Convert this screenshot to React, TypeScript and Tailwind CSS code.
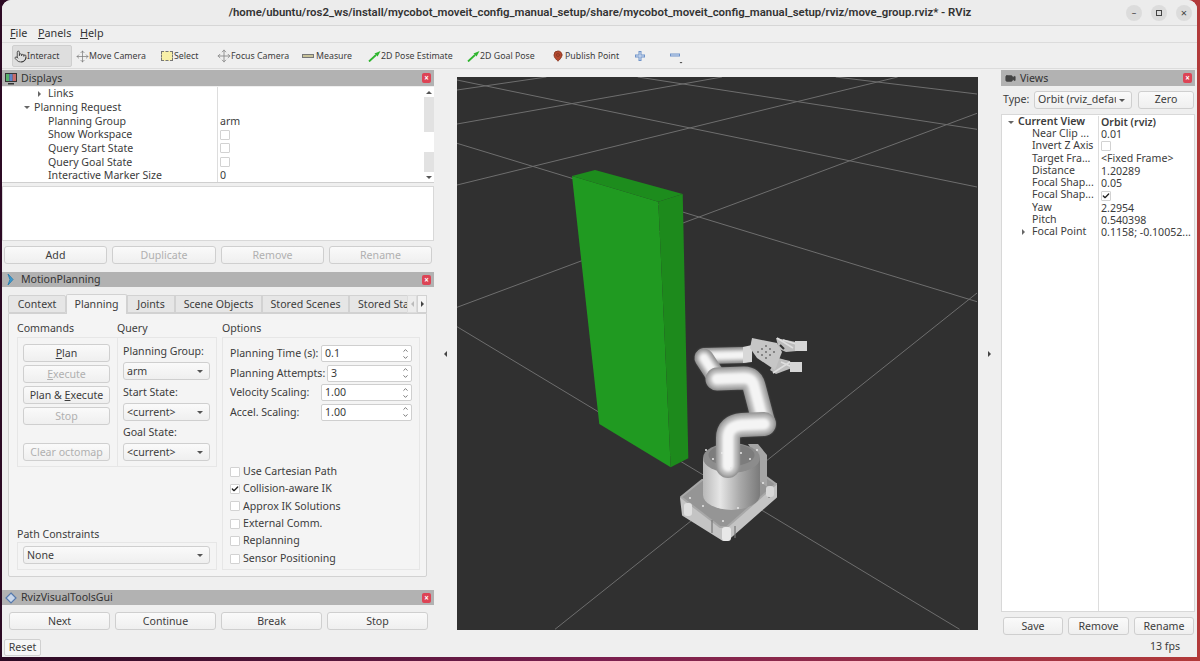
import { ChevronDown, ChevronUp, Check as CheckIcon, MapPin, Move, Pointer, Video } from "lucide-react";
import type { ReactNode } from "react";

const FONT = "font-['Noto_Sans',sans-serif]";

function Btn({ label, disabled, className = "" }: { label: ReactNode; disabled?: boolean; className?: string }) {
  return (
    <div
      className={`h-[18px] pt-[1px] flex items-center justify-center rounded-[3px] border border-[#cfcfcf] bg-gradient-to-b from-[#fafafa] to-[#efefef] text-[10.6px] ${
        disabled ? "text-[#b0b0b0]" : "text-[#3c3c3c]"
      } ${className}`}
    >
      {label}
    </div>
  );
}

function Combo({ label, className = "" }: { label: string; className?: string }) {
  return (
    <div className={`h-[18px] pt-[1px] flex items-center justify-between pl-[3px] pr-[6px] rounded-[3px] border border-[#cfcfcf] bg-gradient-to-b from-[#fafafa] to-[#efefef] text-[10.6px] text-[#3c3c3c] overflow-hidden ${className}`}>
      <span className="whitespace-nowrap overflow-hidden">{label}</span>
      <span className="ml-[3px] shrink-0 w-0 h-0 border-x-[3px] border-x-transparent border-t-[3px] border-t-[#555]" />
    </div>
  );
}

function Spin({ value, className = "" }: { value: string; className?: string }) {
  return (
    <div className={`h-[17px] shrink-0 flex items-center justify-between pl-[3px] rounded-[2px] border border-[#cfcfcf] bg-white text-[10.6px] text-[#3c3c3c] ${className}`}>
      <span className="pt-[1px]">{value}</span>
      <span className="w-[9px] mr-[1px] flex flex-col items-center text-[#666]">
        <ChevronUp size={7} strokeWidth={3} />
        <ChevronDown size={7} strokeWidth={3} />
      </span>
    </div>
  );
}

function Box({ checked }: { checked?: boolean }) {
  return (
    <span className="w-[10px] h-[10px] shrink-0 flex items-center justify-center rounded-[1px] border border-[#d2d2d2] bg-white text-[#222]">
      {checked && <CheckIcon size={8} strokeWidth={4} />}
    </span>
  );
}

function CloseDot() {
  return (
    <span className="w-[9px] h-[10px] flex items-center justify-center rounded-[2px] bg-[#dd4455] text-white text-[8px] leading-none font-bold mr-[3px]">
      ×
    </span>
  );
}

function DockTitle({ icon, title, className = "" }: { icon: ReactNode; title: string; className?: string }) {
  return (
    <div className={`shrink-0 flex items-center justify-between bg-[#b2b2b2] text-[10.6px] text-[#333] ${className}`}>
      <div className="flex items-center">
        <span className="w-[18px] flex justify-center">{icon}</span>
        <span className="ml-[1px] pt-[1px]">{title}</span>
      </div>
      <CloseDot />
    </div>
  );
}

function ToolItem({ icon, label, active, className = "" }: { icon: ReactNode; label: string; active?: boolean; className?: string }) {
  return (
    <div className={`h-[22px] shrink-0 flex items-center text-[8.8px] text-[#3c3c3c] whitespace-nowrap ${active ? "bg-[#dedede] border border-[#cfcfcf] rounded-[2px]" : ""} ${className}`}>
      {icon}
      <span className="pt-[2px]">{label}</span>
    </div>
  );
}

function PoseArrow() {
  return (
    <svg width="13" height="12" viewBox="0 0 13 12">
      <path d="M1 11.5 L8 5" stroke="#2fb52f" strokeWidth="1.8" />
      <path d="M12.5 1 L6.5 3.6 L9.6 6.6 Z" fill="#2fb52f" />
    </svg>
  );
}

const displayRows: { label: string; indent: number; arrow?: "right" | "down"; value?: string; box?: boolean }[] = [
  { label: "Links", indent: 46, arrow: "right" },
  { label: "Planning Request", indent: 32, arrow: "down" },
  { label: "Planning Group", indent: 46, value: "arm" },
  { label: "Show Workspace", indent: 46, box: true },
  { label: "Query Start State", indent: 46, box: true },
  { label: "Query Goal State", indent: 46, box: true },
  { label: "Interactive Marker Size", indent: 46, value: "0" },
];

const viewRows: { label: string; value?: string; box?: boolean; checked?: boolean; arrow?: boolean; bold?: boolean }[] = [
  { label: "Current View", value: "Orbit (rviz)", bold: true },
  { label: "Near Clip ...", value: "0.01" },
  { label: "Invert Z Axis", box: true },
  { label: "Target Fra...", value: "<Fixed Frame>" },
  { label: "Distance", value: "1.20289" },
  { label: "Focal Shap...", value: "0.05" },
  { label: "Focal Shap...", box: true, checked: true },
  { label: "Yaw", value: "2.2954" },
  { label: "Pitch", value: "0.540398" },
  { label: "Focal Point", value: "0.1158; -0.10052...", arrow: true },
];

function Tube({ d, w }: { d: string; w: number }) {
  return (
    <g fill="none" strokeLinecap="round" strokeLinejoin="round">
      <path d={d} stroke="#8a8a8a" strokeWidth={w} />
      <path d={d} stroke="#b9b9b9" strokeWidth={w - 3} filter="url(#soft)" />
      <path d={d} stroke="#f4f4f4" strokeWidth={w * 0.5} filter="url(#soft)" />
    </g>
  );
}

function Scene() {
  const grid = [
    "M457 80L977 187",
    "M637.7 77L977 129.3",
    "M835.7 77L977 94",
    "M457 143.3L977 301.7",
    "M457 326.7L959.6 629.3",
    "M457 90L546.4 77",
    "M457 124L722 77",
    "M457 185L897.7 77",
    "M457 307.3L977 113.3",
    "M555 629.3L977 293",
  ];
  const holes = [
    [713, 459], [731, 468], [750, 459], [741, 453], [722, 453], [706, 450], [757, 450], [690, 498], [723, 521], [763, 483], [703, 506], [738, 508],
  ];
  const gripDots = [
    [762, 349], [766, 352], [770, 349], [762, 355], [766, 358], [770, 355], [758, 352], [774, 352], [766, 346],
  ];
  return (
    <svg viewBox="457 77 521 553" className="w-full h-full block">
      <defs>
        <filter id="soft" filterUnits="userSpaceOnUse" x="457" y="77" width="521" height="553">
          <feGaussianBlur stdDeviation="1.6" />
        </filter>
        <linearGradient id="cyl" x1="0" x2="1" y1="0" y2="0">
          <stop offset="0" stopColor="#b8b8b8" />
          <stop offset="0.3" stopColor="#e6e6e6" />
          <stop offset="0.65" stopColor="#a9a9a9" />
          <stop offset="1" stopColor="#7a7a7a" />
        </linearGradient>
      </defs>
      <rect x="457" y="77" width="521" height="553" fill="#303030" />
      {grid.map((d) => (
        <path key={d} d={d} stroke="#6e6e6e" strokeWidth="1" fill="none" />
      ))}
      <polygon points="572,176 658.3,201.7 670.7,467.3 599.3,424" fill="#209a21" />
      <polygon points="658.3,201.7 682.7,194 688.3,458.3 670.7,467.3" fill="#1d8a1c" />
      <polygon points="572,176 595,170 682.7,194 658.3,201.7" fill="#1d8c1d" />

      <polygon points="683,515 723,540 727,540 776,497 776,484 723,526 681,498" fill="#c4c4c4" stroke="#c4c4c4" strokeWidth="2" strokeLinejoin="round" />
      <polygon points="681,497 702,480 765,476 776,484 727,527 720,527" fill="#959595" stroke="#a8a8a8" strokeWidth="2" strokeLinejoin="round" />
      <path d="M712 520v13M735 526v12M769 490v8" stroke="#777" strokeWidth="1.2" />
      <rect x="684" y="503" width="8" height="13" rx="3" fill="#e0e0e0" />
      <rect x="722" y="527" width="9" height="14" rx="3" fill="#e8e8e8" />
      <rect x="766" y="486" width="8" height="11" rx="3" fill="#d8d8d8" />

      <polygon points="748,444 758,444 767,455 767,487 758,480 758,460" fill="#a5a5a5" />
      <path d="M703 458V495A28.5 15 0 0 0 760 495V458Z" fill="url(#cyl)" />
      <ellipse cx="731.5" cy="458" rx="28.5" ry="15" fill="#8c8c8c" />
      <ellipse cx="731.5" cy="455" rx="23" ry="11" fill="#7c7c7c" />

      <Tube d="M704 356L744 355" w={16} />
      <Tube d="M704 358L717 378" w={19} />
      <Tube d="M717 379L744 378Q752 378 754 386L764 424" w={23} />
      <Tube d="M728 466V438Q728 426 742 425L764 424" w={24} />
      {holes.map(([x, y]) => (
        <circle key={`${x}-${y}`} cx={x} cy={y} r="1" fill="#e8e8e8" />
      ))}

      <polygon points="743,347 752,345 752,362 743,363" fill="#d8d8d8" />
      <polygon points="776,338 796,342 797,351 786,352 779,349" fill="#bdbdbd" />
      <polygon points="778,358 790,361 792,368 776,374 770,370" fill="#bdbdbd" />
      <polygon points="752,338 777,343 782,352 775,370 757,358 750,348" fill="#c6c6c6" />
      {gripDots.map(([x, y]) => (
        <circle key={`${x}-${y}`} cx={x} cy={y} r="0.9" fill="#666" />
      ))}
      <path d="M777 338L793 348M783 340L796 344M773 373L790 362M781 362L792 367" stroke="#dedede" strokeWidth="1.6" fill="none" />
      <path d="M780 345L784 349M783 357L786 359" stroke="#333" strokeWidth="2" />
      <rect x="795" y="341" width="12" height="10" fill="#d6d6d6" />
      <rect x="790" y="362" width="12" height="10" fill="#d6d6d6" />
    </svg>
  );
}

export default function App() {
  return (
    <div className={`w-[1200px] h-[661px] overflow-hidden pl-[2px] pr-[3px] pb-[4px] bg-gradient-to-r from-[#2c0a24] via-[#7a1f4f] to-[#b23a3a] ${FONT}`}>
      <div className="w-full h-full flex flex-col bg-[#efefef] rounded-t-[9px] overflow-hidden text-[#3c3c3c]">
        {/* title bar */}
        <div className="h-[26px] shrink-0 flex items-center border-b border-[#d6d6d6] bg-[#ececec]">
          <div className="flex-1 pl-[72px] text-center text-[11.4px] font-['Roboto',sans-serif] font-semibold text-[#333] whitespace-nowrap">
            /home/ubuntu/ros2_ws/install/mycobot_moveit_config_manual_setup/share/mycobot_moveit_config_manual_setup/rviz/move_group.rviz* - RViz
          </div>
          <div className="w-[71px] flex items-center gap-[9px] text-[#444]">
            <span className="w-[16px] h-[16px] rounded-full bg-[#dcdcdc] flex items-center justify-center text-[9px] leading-none">–</span>
            <span className="w-[16px] h-[16px] rounded-full bg-[#dcdcdc] flex items-center justify-center"><span className="w-[6px] h-[6px] border border-[#444]" /></span>
            <span className="w-[16px] h-[16px] rounded-full bg-[#dcdcdc] flex items-center justify-center text-[11px] leading-none">×</span>
          </div>
        </div>

        {/* menu bar */}
        <div className="h-[16px] shrink-0 flex items-center pl-[8px] pb-[1px] text-[10.8px] text-[#333]">
          <span className="w-[28px]"><span className="underline">F</span>ile</span>
          <span className="w-[42px]"><span className="underline">P</span>anels</span>
          <span><span className="underline">H</span>elp</span>
        </div>

        {/* toolbar */}
        <div className="h-[27px] shrink-0 flex items-center pl-[10px] pt-[1px] border-t border-b border-[#dcdcdc]">
          <ToolItem active className="w-[60px] pl-[1px]" label="Interact" icon={<Pointer size={13} strokeWidth={1.5} className="text-[#333]" />} />
          <ToolItem className="ml-[4px] w-[85px]" label="Move Camera" icon={<Move size={13} strokeWidth={1.3} className="text-[#777]" />} />
          <ToolItem className="w-[56px]" label="Select" icon={
            <span className="w-[12px] h-[10px] mr-[1px] bg-[#f8f0a8] border border-[#777] border-dashed" />
          } />
          <ToolItem className="w-[85px]" label="Focus Camera" icon={<Move size={14} strokeWidth={1.5} className="text-[#888]" />} />
          <ToolItem className="w-[66px]" label="Measure" icon={<span className="w-[12px] h-[4px] mr-[2px] bg-[#c9c39a] border border-[#777]" />} />
          <ToolItem className="w-[99px]" label="2D Pose Estimate" icon={<PoseArrow />} />
          <ToolItem className="w-[85px]" label="2D Goal Pose" icon={<PoseArrow />} />
          <ToolItem className="w-[82px]" label="Publish Point" icon={<MapPin size={12} fill="#b5482e" stroke="#8e3b25" className="mr-[1px]" />} />
          <svg width="12" height="12" viewBox="0 0 12 12"><path d="M6 1v10M1 6h10" stroke="#6f93c9" strokeWidth="3" /><path d="M6 2v8M2 6h8" stroke="#d7e2f3" strokeWidth="1" /></svg>
          <svg width="16" height="16" viewBox="0 0 16 16" className="ml-[23px] mt-[2px]"><path d="M1 6h10" stroke="#6f93c9" strokeWidth="3" /><path d="M2 6h8" stroke="#d7e2f3" strokeWidth="1" /><path d="M10.5 13h3l-1.5 1.5z" fill="#444" /></svg>
        </div>

        <div className="h-[568px] shrink-0 flex">
          {/* left docks */}
          <div className="w-[432px] shrink-0 pt-[1px] flex flex-col">
            <DockTitle
              className="h-[16px]"
              title="Displays"
              icon={
                <svg width="14" height="13" viewBox="0 0 14 13">
                  <rect x="1" y="1" width="12" height="9" fill="#333" />
                  <rect x="2" y="2" width="3.4" height="7" fill="#55b06a" />
                  <rect x="5.4" y="2" width="3.3" height="7" fill="#5d83c8" />
                  <rect x="8.7" y="2" width="3.3" height="7" fill="#c76a6a" />
                  <rect x="4" y="11" width="6" height="1.5" fill="#333" />
                </svg>
              }
            />
            <div className="mt-[1px] h-[96px] flex bg-white border-b border-[#cfcfcf] overflow-hidden">
              <div className="flex-1 flex flex-col">
                {displayRows.map((r) => (
                  <div key={r.label} className="h-[13.7px] shrink-0 flex items-center text-[10.6px] leading-none first:-mt-[0.3px]">
                    <div className="w-[216px] h-full border-r border-[#dddddd] flex items-center relative whitespace-nowrap" style={{ paddingLeft: r.indent }}>
                      {r.arrow === "right" && <span className="absolute left-[36px] w-0 h-0 border-y-[3px] border-y-transparent border-l-[3px] border-l-[#666]" />}
                      {r.arrow === "down" && <span className="absolute left-[22px] w-0 h-0 border-x-[3px] border-x-transparent border-t-[3px] border-t-[#666]" />}
                      {r.label}
                    </div>
                    <div className="pl-[2px]">{r.box ? <Box /> : r.value}</div>
                  </div>
                ))}
              </div>
              <div className="w-[10px] shrink-0 flex flex-col bg-[#e2e2e2] text-[#555] items-center">
                <span className="h-[10px] w-full bg-white flex justify-center items-center"><span className="w-0 h-0 border-x-[3px] border-x-transparent border-b-[3px] border-b-[#555]" /></span>
                <span className="h-[35px]" />
                <span className="h-[20px] w-full bg-white" />
                <span className="flex-1" />
                <span className="h-[10px] w-full bg-white flex justify-center items-center"><span className="w-0 h-0 border-x-[3px] border-x-transparent border-t-[3px] border-t-[#555]" /></span>
              </div>
            </div>
            <div className="mt-[3px] h-[55px] shrink-0 bg-white border border-[#d8d8d8]" />
            <div className="mt-[5px] px-[2px] flex gap-[5px]">
              <Btn className="w-[103px]" label="Add" />
              <Btn className="w-[104px]" disabled label="Duplicate" />
              <Btn className="w-[103px]" disabled label="Remove" />
              <Btn className="w-[103px]" disabled label="Rename" />
            </div>

            <DockTitle
              className="mt-[8px] h-[15px]"
              title="MotionPlanning"
              icon={
                <svg width="10" height="13" viewBox="0 0 10 13">
                  <path d="M2 1L7 6.5L2 12L4 6.5Z" fill="#3f9bd1" stroke="#2b7fb0" strokeWidth="1" />
                </svg>
              }
            />

            {/* tabs */}
            <div className="mt-[7px] ml-[6px] h-[19px] shrink-0 flex items-end text-[10.6px] text-[#3c3c3c]">
              <div className="w-[58px] h-[18px] pt-[2px] flex items-center justify-center bg-[#e6e6e6] border border-[#d2d2d2] rounded-t-[2px]">Context</div>
              <div className="w-[61px] h-[20px] -mb-[1px] relative flex items-center justify-center bg-[#f4f4f4] border border-b-0 border-[#d2d2d2] rounded-t-[2px]">Planning</div>
              <div className="w-[48px] h-[18px] pt-[2px] flex items-center justify-center bg-[#e6e6e6] border border-[#d2d2d2]">Joints</div>
              <div className="w-[87px] h-[18px] pt-[2px] flex items-center justify-center bg-[#e6e6e6] border border-[#d2d2d2]">Scene Objects</div>
              <div className="w-[87px] h-[18px] pt-[2px] flex items-center justify-center bg-[#e6e6e6] border border-[#d2d2d2]">Stored Scenes</div>
              <div className="w-[58px] h-[18px] pt-[2px] pl-[8px] flex items-center overflow-hidden whitespace-nowrap bg-[#e6e6e6] border border-[#d2d2d2] border-r-0">Stored Sta</div>
              <div className="w-[10px] h-[18px] flex items-center justify-center bg-[#ececec] border border-[#dcdcdc]"><span className="w-0 h-0 border-y-[3px] border-y-transparent border-r-[3px] border-r-[#bbb]" /></div>
              <div className="w-[10px] h-[18px] flex items-center justify-center bg-[#f4f4f4] border border-[#d2d2d2]"><span className="w-0 h-0 border-y-[3px] border-y-transparent border-l-[3px] border-l-[#444]" /></div>
            </div>

            {/* planning tab */}
            <div className="ml-[6px] w-[419px] h-[264px] shrink-0 flex pl-[8px] pt-[7px] bg-[#f4f4f4] border border-[#d2d2d2] rounded-b-[2px] text-[10.6px]">
              <div className="w-[200px] shrink-0 flex flex-col">
                <div className="h-[14px] flex leading-[14px]">
                  <span className="w-[100px]">Commands</span>
                  <span>Query</span>
                </div>
                <div className="mt-[2px] h-[130px] flex">
                  <div className="w-[100px] pl-[5px] pt-[6px] border border-r-0 border-[#e6e6e6] flex flex-col gap-[3px]">
                    <Btn className="w-[87px]" label={<span><span className="underline">P</span>lan</span>} />
                    <Btn className="w-[87px]" disabled label={<span><span className="underline">E</span>xecute</span>} />
                    <Btn className="w-[87px]" label={<span>Plan &amp; <span className="underline">E</span>xecute</span>} />
                    <Btn className="w-[87px]" disabled label="Stop" />
                    <Btn className="w-[87px] mt-[15px]" disabled label="Clear octomap" />
                  </div>
                  <div className="w-[100px] pl-[5px] pt-[6px] border border-[#e6e6e6] flex flex-col">
                    <span className="h-[14px] leading-[14px]">Planning Group:</span>
                    <Combo className="w-[87px] mt-[4px]" label="arm" />
                    <span className="h-[14px] leading-[14px] mt-[5px]">Start State:</span>
                    <Combo className="w-[87px] mt-[4px]" label="<current>" />
                    <span className="h-[14px] leading-[14px] mt-[4px]">Goal State:</span>
                    <Combo className="w-[87px] mt-[4px]" label="<current>" />
                  </div>
                </div>
                <div className="mt-[60px] h-[14px] leading-[14px]">Path Constraints</div>
                <div className="mt-[1px] h-[28px] pl-[5px] pt-[3px] border border-[#e6e6e6]">
                  <Combo className="w-[187px]" label="None" />
                </div>
              </div>
              <div className="ml-[5px] w-[198px] flex flex-col">
                <div className="h-[14px] leading-[14px]">Options</div>
                <div className="mt-[2px] h-[233px] pl-[7px] pt-[7px] border border-[#e6e6e6]">
                  <div className="w-[182px] h-[17px] flex items-center justify-between whitespace-nowrap">
                    <span className="pt-[1px]">Planning Time (s):</span>
                    <Spin className="w-[91px]" value="0.1" />
                  </div>
                  <div className="mt-[2.5px] w-[182px] h-[17px] flex items-center justify-between whitespace-nowrap">
                    <span className="pt-[1px]">Planning Attempts:</span>
                    <Spin className="w-[85px]" value="3" />
                  </div>
                  <div className="mt-[2.5px] w-[182px] h-[17px] flex items-center justify-between whitespace-nowrap">
                    <span className="pt-[1px]">Velocity Scaling:</span>
                    <Spin className="w-[91px]" value="1.00" />
                  </div>
                  <div className="mt-[2.5px] w-[182px] h-[17px] flex items-center justify-between whitespace-nowrap">
                    <span className="pt-[1px]">Accel. Scaling:</span>
                    <Spin className="w-[91px]" value="1.00" />
                  </div>
                  <div className="mt-[42.5px] flex flex-col">
                    {["Use Cartesian Path", "Collision-aware IK", "Approx IK Solutions", "External Comm.", "Replanning", "Sensor Positioning"].map((c) => (
                      <div key={c} className="h-[17.4px] flex items-center gap-[3px]">
                        <Box checked={c === "Collision-aware IK"} />
                        <span>{c}</span>
                      </div>
                    ))}
                  </div>
                </div>
              </div>
            </div>

            <DockTitle
              className="mt-[13px] h-[15px]"
              title="RvizVisualToolsGui"
              icon={
                <svg width="12" height="12" viewBox="0 0 12 12">
                  <path d="M6 1L11 6L6 11L1 6Z" fill="#c9d6ea" stroke="#5579ad" strokeWidth="1.2" />
                </svg>
              }
            />
            <div className="mt-[7px] flex gap-[5px] pl-[7px]">
              <Btn className="w-[101px]" label="Next" />
              <Btn className="w-[101px]" label="Continue" />
              <Btn className="w-[101px]" label="Break" />
              <Btn className="w-[101px]" label="Stop" />
            </div>
          </div>

          {/* 3D viewport */}
          <div className="flex-1 flex items-start pt-[8px]">
            <div className="w-[23px] h-[553px] flex items-center justify-center">
              <span className="w-0 h-0 border-y-[3px] border-y-transparent border-r-[3px] border-r-[#444]" />
            </div>
            <div className="w-[521px] h-[553px] shrink-0"><Scene /></div>
            <div className="w-[23px] h-[553px] flex items-center justify-center">
              <span className="w-0 h-0 border-y-[3px] border-y-transparent border-l-[3px] border-l-[#444]" />
            </div>
          </div>

          {/* views dock */}
          <div className="w-[194px] shrink-0 mr-[2px] pt-[1px] flex flex-col text-[10.6px]">
            <DockTitle className="h-[16px]" title="Views" icon={<Video size={11} fill="#444" stroke="#444" />} />
            <div className="mt-[5px] h-[17px] flex items-center pl-[2px]">
              <span className="w-[31px]">Type:</span>
              <Combo className="w-[98px]" label="Orbit (rviz_defau" />
              <Btn className="w-[56px] ml-[6px]" label="Zero" />
            </div>
            <div className="mt-[6px] h-[498px] pt-[0.7px] flex flex-col bg-white border border-[#d8d8d8] relative">
              {viewRows.map((r, i) => (
                <div key={i} className={`h-[12.3px] shrink-0 flex items-center leading-none whitespace-nowrap ${r.bold ? "font-semibold" : ""}`}>
                  <div className="w-[96px] h-full relative pl-[30px]">
                    {r.bold && <span className="absolute left-[6px] top-[5px] w-0 h-0 border-x-[3px] border-x-transparent border-t-[3px] border-t-[#666]" />}
                    {r.arrow && <span className="absolute left-[20px] top-[3px] w-0 h-0 border-y-[3px] border-y-transparent border-l-[3px] border-l-[#666]" />}
                    <span className={r.bold ? "-ml-[14px]" : ""}>{r.label}</span>
                  </div>
                  <div className="pl-[2px] border-l border-[#dddddd] h-full flex items-center">{r.box ? <Box checked={r.checked} /> : r.value}</div>
                </div>
              ))}
              <div className="flex-1 ml-[96px] border-l border-[#dddddd]" />
            </div>
            <div className="mt-[5px] flex gap-[5px] pl-[2px]">
              <Btn className="w-[60px]" label="Save" />
              <Btn className="w-[61px]" label="Remove" />
              <Btn className="w-[60px]" label="Rename" />
            </div>
          </div>
        </div>

        {/* status bar */}
        <div className="flex-1 flex items-center justify-between pl-[2px] pr-[17px] text-[10.6px]">
          <div className="w-[37px] h-[17px] pt-[1px] flex items-center justify-center rounded-[2px] border border-[#d0d0d0] bg-[#f6f6f6]">Reset</div>
          <span className="pb-[1px]">13 fps</span>
        </div>
      </div>
    </div>
  );
}
